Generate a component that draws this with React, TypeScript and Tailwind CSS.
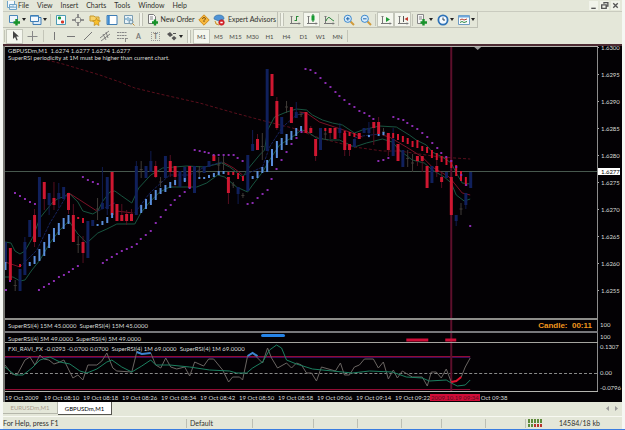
import React from "react";

type Kind = "u" | "d" | "g";
// kind, body top, body bottom, wick top, wick bottom
type Candle = [Kind, number, number, number?, number?];

const STEP = 4.854;
const cx = (i: number) => 5.5 + STEP * i;

const CANDLES: Candle[] = [
    ["u", 242, 262], ["d", 248, 280], ["g", 280, 291], ["u", 269, 291], ["u", 242, 275, 237, 275],
    ["u", 220, 237], ["d", 215, 242, 209, 247], ["u", 177, 237], ["d", 182, 199, 182, 210], ["u", 193, 205, 193, 215],
    ["d", 198, 205, 182, 210], ["u", 193, 199, 183, 208], ["u", 187, 199], ["d", 193, 210, 193, 214], ["d", 215, 242, 204, 242],
    ["g", 236, 253], ["d", 242, 253, 236, 263], ["u", 221, 258], ["u", 220, 226], ["g", 198, 220],
    ["u", 203, 209, 167, 209], ["u", 177, 209, 177, 215], ["d", 172, 215], ["d", 204, 221], ["d", 215, 221, 204, 221],
    ["d", 214, 221, 210, 225], ["d", 214, 221, 209, 221], ["u", 166, 215, 161, 215], ["g", 161, 178], ["u", 166, 178],
    ["u", 161, 172, 151, 172], ["d", 166, 177, 161, 178], ["g", 177, 187], ["u", 156, 178], ["d", 161, 172, 155, 177],
    ["d", 166, 177, 166, 187], ["u", 171, 187], ["u", 167, 181], ["d", 166, 188], ["u", 166, 193],
    ["g", 166, 178], ["u", 166, 173], ["u", 161, 167], ["d", 155, 161], ["g", 157, 173],
    ["g", 156, 170], ["d", 177, 193, 177, 204], ["g", 182, 188], ["u", 187, 194, 187, 204], ["g", 193, 198],
    ["u", 155, 191], ["u", 144, 151, 130, 151], ["d", 139, 150, 134, 150], ["g", 133, 160], ["u", 69, 151],
    ["d", 74, 96], ["d", 101, 128, 97, 130], ["u", 117, 134], ["g", 101, 113], ["d", 107, 123],
    ["u", 112, 118, 102, 118], ["g", 112, 117], ["d", 112, 133], ["d", 128, 133, 126, 133], ["d", 139, 156, 139, 161],
    ["u", 128, 150], ["g", 128, 140], ["d", 128, 133, 128, 139], ["d", 128, 139], ["u", 128, 133, 123, 138],
    ["d", 133, 150, 131, 156], ["d", 144, 150, 144, 156], ["u", 139, 147], ["d", 133, 139], ["u", 128, 133],
    ["u", 128, 133, 122, 138], ["d", 122, 128, 122, 145], ["d", 122, 134, 117, 136], ["g", 128, 136], ["d", 133, 150, 133, 156],
    ["u", 139, 156, 128, 156], ["d", 144, 161], ["u", 150, 167], ["g", 150, 167], ["g", 154, 172],
    ["d", 156, 161, 156, 166], ["d", 156, 161, 156, 172], ["d", 166, 188], ["u", 166, 183], ["d", 166, 172, 155, 177],
    ["d", 177, 182, 172, 188], ["u", 172, 178], ["d", 177, 215], ["u", 215, 221, 215, 226], ["g", 203, 215],
    ["u", 193, 205, 193, 209], ["u", 172, 188],
];

const BODY = { u: "#10205c", d: "#cf1731", g: "#403c38" };
const WICK = { u: "#101c50", d: "#560f20", g: "#403c38" };

// candle index, top, bottom
const UP_TREND: number[][] = [
    [5, 262, 266], [6, 256, 264], [7, 249, 261], [8, 242, 256], [9, 234, 248], [10, 228, 242], [11, 223, 235],
    [12, 218, 229], [13, 215, 224], [19, 224, 226], [20, 221, 225], [21, 217, 223], [22, 213, 218], [28, 205, 213],
    [29, 199, 209], [30, 194, 205], [31, 190, 200], [32, 188, 194], [33, 185, 192], [34, 182, 188], [35, 180, 185],
    [37, 178, 182], [40, 177, 179], [41, 177, 179], [42, 175, 178], [43, 173, 177], [44, 171, 175], [45, 171, 174],
    [51, 176, 179], [52, 171, 178], [53, 167, 173], [54, 160, 172], [55, 149, 166], [56, 141, 158], [57, 138, 150],
    [58, 134, 145], [59, 131, 140], [60, 128, 136], [61, 126, 131], [0, 262, 270], [75, 135, 137], [77, 134, 136],
    [78, 132, 135],
];
const DOWN_TREND: number[][] = [
    [3, 264, 267], [15, 217, 219], [16, 218, 223], [46, 172, 175], [47, 172, 175], [48, 173, 179], [49, 176, 181],
    [66, 128, 131], [70, 131, 135], [71, 132, 136], [72, 133, 137], [80, 133, 138], [81, 134, 140], [82, 136, 142],
    [83, 138, 144], [84, 141, 147], [85, 140, 148], [86, 146, 151], [87, 147, 153], [88, 150, 158], [89, 153, 160],
    [90, 156, 162], [91, 157, 165], [92, 160, 168], [93, 165, 176], [94, 171, 181], [95, 177, 186],
];

// parabolic stops, one per candle
const STOPS = [
    290, 281, 193, 196, 199, 202, 204, 290, 287, 284, 281, 277, 275, 272, 269, 266, 177, 180, 182, 184, 263, 260, 257,
    254, 251, 249, 247, 244, 239, 235, 231, 223, 217, 210, 205, 200, 196, 192, 188, 150, 151, 152, 153, 155, 155, 155,
    155, 155, 158, 161, 204, 203, 198, 194, 190, 179, 169, 160, 152, 144, 138, 132, 69, 70, 73, 78, 83, 87, 92, 96, 100,
    104, 107, 111, 113, 116, 119, 161, 160, 158, 117, 119, 120, 123, 126, 129, 133, 137, 143, 148, 153, 157, 161, 167,
    175, 185, 226,
];

const UPPER =
    "5,242 11,243 15,251 20,254 25,251 33,237 40,218 44,213 53,202 59,198 64,197 69,193 78,202 83,211 93,214 98,211 103,201 110,192 115,191 122,196 132,203 139,188 151,175 163,168 187,166 205,167 222,163 230,167 238,173 243,177 250,167 260,155 265,150 268,130 275,117 287,112 297,109 307,110 313,115 323,120 333,123 343,125 355,133 363,130 380,126 397,127 410,135 417,140 427,145 433,152 443,157 452,163 457,173 463,183 471,184";
const LOWER =
    "5,277 13,277 20,281 25,280 32,270 40,260 50,243 59,231 69,221 78,234 87,243 98,233 107,229 117,224 135,224 141,213 150,202 160,192 170,187 187,187 197,187 207,183 218,175 225,177 237,187 248,192 253,185 263,172 270,160 280,145 290,139 302,130 307,131 317,138 330,140 340,140 355,147 367,143 383,139 393,142 400,150 413,160 425,163 433,170 445,177 452,183 457,195 465,201 471,199";
const MID_RED = [
    "5,262 20,267", "69,193 80,200 97,211", "117,211 133,213", "225,163 234,168 243,175",
    "300,112 307,113 320,122 335,127 350,132 363,137", "383,135 390,137 407,147 423,157 433,167 450,177 463,193 471,195",
];
const MID_BLUE = [
    "20,267 37,250 50,223 60,207 67,195", "98,211 115,203", "135,213 150,193 170,175 190,175 205,167 222,162",
    "245,175 263,167 270,147 283,127 297,115 305,113", "355,138 363,136 380,134",
];
const SLOW = "47,60 63,64 80,69 100,75 120,82 135,88 160,94 200,103 235,113 265,121 293,128 320,138 355,147 383,151 400,151 440,157 471,159";

const RAVI =
    "5,367 15,375 23,375 32,368 40,360 50,357 60,362 70,364 80,371 87,373 97,369 107,362 112,360 122,367 132,372 142,366 151,360 156,365 170,365 190,367 210,370 230,371 237,373 247,373 253,368 263,362 270,350 277,345 282,348 287,360 297,364 313,369 333,371 353,373 370,371 393,372 407,377 423,378 430,381 447,380 452,383 458,386 466,385 471,380";
const RSI =
    "5,365 12,374 17,375 25,360 30,357 35,365 40,355 44,359 49,360 54,364 60,362 64,360 73,378 78,375 83,380 88,365 97,365 102,361 107,353 113,368 117,371 132,372 137,352 142,354 151,353 156,365 161,368 166,358 171,367 177,369 185,367 190,376 195,362 204,366 209,359 214,359 223,370 229,382 233,377 240,377 243,380 248,356 253,353 263,363 268,348 272,358 278,368 287,363 292,368 297,363 302,365 307,373 312,373 317,381 322,367 336,371 341,363 345,375 350,375 355,367 360,365 365,359 374,359 379,368 384,362 389,379 394,370 398,378 403,371 413,377 423,377 428,386 432,372 437,372 442,378 447,369 452,382 457,381 462,377 466,367 471,358";

const PRICES = ["1.6300", "1.6295", "1.6290", "1.6285", "1.6280", "1.6275", "1.6270", "1.6265", "1.6260", "1.6255"];
const TIMES = ["2009", "08:10", "08:18", "08:26", "08:34", "08:42", "08:50", "08:58", "09:06", "09:14"];
const MENU = ["File", "View", "Insert", "Charts", "Tools", "Window", "Help"];
const FRAMES = ["M1", "M5", "M15", "M30", "H1", "H4", "D1", "W1", "MN"];

const Icon: React.FC<{ children: React.ReactNode }> = ({ children }) => (
    <svg viewBox="0 0 12 12" className="h-3 w-3 shrink-0" fill="none" stroke="#555" strokeWidth="1" aria-hidden="true">
        {children}
    </svg>
);

const Tool: React.FC<{ label: string; pressed?: boolean; menu?: boolean; children: React.ReactNode }> = ({
    label,
    pressed,
    menu,
    children,
}) => (
    <button
        type="button"
        aria-label={label}
        className={`flex h-[15px] shrink-0 items-center justify-center ${menu ? "w-[21px]" : "w-[17px]"} ${
            pressed ? "border border-[#c4c7bb] bg-[#f4f6ee]" : ""
        }`}
    >
        <Icon>{children}</Icon>
        {menu && (
            <svg viewBox="0 0 4 3" className="ml-px h-[3px] w-1 shrink-0" aria-hidden="true">
                <path d="M0 0h4L2 3z" fill="#222" />
            </svg>
        )}
    </button>
);

const Sep = () => <span className="mx-px h-3 w-px shrink-0 bg-[#c3c5b8]" />;
const Grip = () => <span className="mx-0.5 h-[13px] w-1 shrink-0 border-x border-[#c0c2b6] bg-[#f0f2e8]" />;

const Axes = () => <path d="M2.5 2v8M1 9.5h10M1.5 3l1-1 1 1M10 8.5l1 1-1 1" stroke="#777" />;

const Toolbar = () => (
    <div className="flex h-[17px] items-center border-t border-[#c9cbbf]">
        <div className="flex h-4 items-center border-r border-b border-[#bfc1b5] pl-1">
            <Tool label="New chart" menu>
                <path d="M.5 1.5h8v7h-8z" fill="#eef4fb" stroke="#4a86b8" />
                <path d="M7.500 5v6.500M4.500 8.500h6.500" stroke="#17922a" strokeWidth="2.400" />
            </Tool>
            <Tool label="Profiles" menu>
                <path d="M3 3.500h8v7H3z" fill="#dceaf7" stroke="#3e7db5" />
                <path d="M.5 1.500h8v6h-8z" fill="#f5f9fd" stroke="#3e7db5" />
                <path d="M1 2.500h7" stroke="#7db0dc" />
            </Tool>
            <Sep />
            <Tool label="Market watch">
                <path d="M1.500 1.500h9v9h-9z" fill="#f7fbff" stroke="#4b9bb5" />
                <path d="M3 4h3M4.500 2.500v3" stroke="#1d9c38" strokeWidth="2" />
                <path d="M6 8h3M7.500 6.500v3" stroke="#d43b2c" strokeWidth="2" />
            </Tool>
            <Tool label="Data window">
                <circle cx="6" cy="6" r="3" stroke="#999" />
                <path d="M6 0v4M6 8v4M0 6h4M8 6h4" stroke="#777" strokeWidth="1.500" />
            </Tool>
            <Tool label="Navigator">
                <path d="M1 2h4l1 1h4v4H1z" fill="#f7d36a" stroke="#c79a2e" />
                <path d="M7.500 4l1.200 2.500 2.800.3-2 2 .5 2.700-2.500-1.300L5 11.500l.5-2.700-2-2 2.800-.3z" fill="#f8bf2c" stroke="#c28a17" strokeWidth=".7" />
            </Tool>
            <Tool label="Terminal">
                <path d="M1 1.500h10v9H1z" fill="#fff" stroke="#3e7db5" />
                <path d="M2.500 2v8" stroke="#3f8bd0" strokeWidth="2.500" />
            </Tool>
            <Tool label="Strategy tester">
                <path d="M1.500 1.500h8v8h-8z" fill="#e8f2f8" stroke="#7a9db2" />
                <path d="M3 6V4M5 7V3M7 6V4" stroke="#4c8fb8" />
                <circle cx="8" cy="8" r="2" fill="#d6ecf8" stroke="#6d8da0" />
                <path d="M9.500 9.500l2 2" stroke="#c58a2c" />
            </Tool>
            <Grip />
            <button type="button" className="flex h-[15px] items-center gap-px pl-0.5">
                <Icon>
                    <path d="M1.500.5h5l2 2v7h-7z" fill="#fafafa" stroke="#777" />
                    <path d="M3 3h3M3 5h3" stroke="#888" />
                    <path d="M8 5.500v6M5 8.500h6" stroke="#17922a" strokeWidth="2.400" />
                </Icon>
                <span className="w-[35px] whitespace-nowrap">New Order</span>
            </button>
            <Tool label="Editor">
                <path d="M6 .8L11.200 6 6 11.200.8 6z" fill="#f6b73c" stroke="#d28c1c" />
                <path d="M4.500 5q0-1.500 1.500-1.500T7.500 5L6 6.500V8" stroke="#7d5212" />
            </Tool>
            <button type="button" className="flex h-[15px] items-center gap-0.5 pl-px">
                <Icon>
                    <path d="M1 5q0-4 5-4t5 4l-5 2z" fill="#4f94d6" stroke="#3470a8" strokeWidth=".7" />
                    <path d="M2 7q0 4 4 4" fill="#f3ca6c" stroke="#c9973b" />
                    <circle cx="8.500" cy="8.500" r="2.800" fill="#d8232a" stroke="#b4161c" strokeWidth=".5" />
                    <path d="M7.300 8.500h2.400" stroke="#fff" strokeWidth="1.500" />
                </Icon>
                <span className="w-[50px] whitespace-nowrap">Expert Advisors</span>
            </button>
        </div>
        <div className="flex h-4 items-center border-r border-b border-[#bfc1b5]">
            <Grip />
            <Tool label="Bar chart">
                <Axes />
                <path d="M7.500 2v5M7.500 2.500h2M5.500 6.500h2" stroke="#2a8a3a" />
            </Tool>
            <Tool label="Candlesticks" pressed>
                <Axes />
                <path d="M7 0v8" stroke="#17702a" />
                <path d="M7 1.500v5" stroke="#159a30" strokeWidth="3" />
            </Tool>
            <Tool label="Line chart">
                <Axes />
                <path d="M3 7q2-5 4-3t4 3" stroke="#2f8a40" />
            </Tool>
            <Sep />
            <Tool label="Zoom in">
                <path d="M7.500 7.500l3.500 3.500" stroke="#d09a3c" strokeWidth="2" />
                <circle cx="4.800" cy="4.800" r="3.600" fill="#d8ecfb" stroke="#3b87cc" />
                <path d="M3 4.800h3.600M4.800 3v3.600" stroke="#2167aa" />
            </Tool>
            <Tool label="Zoom out">
                <path d="M7.500 7.500l3.500 3.500" stroke="#d09a3c" strokeWidth="2" />
                <circle cx="4.800" cy="4.800" r="3.600" fill="#d8ecfb" stroke="#3b87cc" />
                <path d="M3 4.800h3.600" stroke="#2167aa" />
            </Tool>
            <Sep />
            <Tool label="Auto scroll" pressed>
                <Axes />
                <path d="M6 3v5l4-2.500z" fill="#1e9a35" stroke="none" />
            </Tool>
            <Tool label="Chart shift" pressed>
                <Axes />
                <path d="M6.500 2v6" />
                <path d="M11 3v4L7.500 5z" fill="#c4392d" stroke="none" />
            </Tool>
            <Sep />
            <Tool label="Indicators" menu>
                <path d="M1.500.5h6v9h-6z" fill="#f4f4f4" stroke="#888" />
                <path d="M3 3h3M3 5h3" stroke="#888" />
                <path d="M7.500 5v6.500M4.500 8.500h6.500" stroke="#17922a" strokeWidth="2.400" />
            </Tool>
            <Tool label="Periods" menu>
                <circle cx="6" cy="6" r="4.600" fill="#f4faff" stroke="#2f73b8" strokeWidth="1.800" />
                <path d="M6 3.500V6h2" stroke="#345" />
            </Tool>
            <Tool label="Templates" menu>
                <path d="M.5 1.500h11v9H.5z" fill="#f7fbff" stroke="#6f9cc2" />
                <path d="M1 2.500h10" stroke="#6fa8dc" strokeWidth="2" />
                <path d="M2 6l2-1 2 1 3-1" stroke="#b8432f" />
                <path d="M2 8.500l2-1 2 1 3-1" stroke="#2f8a40" />
            </Tool>
        </div>
    </div>
);

const DrawBar = () => (
    <div className="flex h-4 items-center">
        <Sep />
        <Tool label="Cursor" pressed>
            <path d="M4 1v8l2-2 1.500 3.500 1.200-.6L7.300 6.500H10z" fill="#444" stroke="none" />
        </Tool>
        <Tool label="Crosshair">
            <path d="M6.500 1v10M1.500 6.500h10" stroke="#888" />
        </Tool>
        <span className="w-0.5" />
        <Sep />
        <Tool label="Vertical line">
            <path d="M6.500 2v8" stroke="#777" />
        </Tool>
        <Tool label="Horizontal line">
            <path d="M2 6.500h8" stroke="#777" />
        </Tool>
        <Tool label="Trendline">
            <path d="M2 10l8-8" stroke="#777" />
        </Tool>
        <Tool label="Channel">
            <path d="M1 8l9-7M2 11l9-7M4 4l3 6M7 2l2 6" stroke="#777" strokeWidth=".9" />
        </Tool>
        <Tool label="Fibonacci">
            <path d="M1 2.500h10M1 5.500h10M1 8.500h7" stroke="#888" strokeDasharray="2 .5" />
            <path d="M9.500 8v4M9.500 8.500H12" stroke="#777" strokeWidth=".8" />
        </Tool>
        <button type="button" className="w-[17px] text-center font-bold text-[#777]">A</button>
        <button type="button" className="flex w-[17px] justify-center">
            <span className="h-[9px] w-[9px] border border-dotted border-[#999] text-center leading-[7px] font-bold text-[#777]">T</span>
        </button>
        <Tool label="Arrows" menu>
            <path d="M4 2l3 3-3 2-3-3zM8 6l2.500 2L8 10.500 5.500 8z" fill="#555" stroke="none" />
            <path d="M7 3.500h3" />
        </Tool>
        <Grip />
        {FRAMES.map((f, i) => (
            <button
                key={f}
                type="button"
                className={`h-[15px] w-[17px] text-center text-[6px] text-[#4a4a46] ${
                    i === 0 ? "border border-[#c4c7bb] bg-[#f4f6ee]" : ""
                }`}
            >
                {f}
            </button>
        ))}
        <Sep />
    </div>
);

const Cross = () => <path d="M452 0V400" stroke="#5d0f2b" strokeWidth="2" />;

const Pane: React.FC<{
    box: string;
    size: string;
    axis: React.ReactNode;
    children: React.ReactNode;
    label: React.ReactNode;
}> = ({ box, size, axis, children, label }) => (
    <div className={`flex ${size}`}>
        <div className="relative min-w-0 flex-1 border-r border-[#8c8c8c]">
            <svg viewBox={box} preserveAspectRatio="none" className="block h-full w-full" fill="none">
                {children}
            </svg>
            <div className="absolute top-0 left-[3px] whitespace-nowrap">{label}</div>
        </div>
        <div className="relative w-6">{axis}</div>
    </div>
);

const MainPane = () => (
    <Pane
        box="5 47 593 271"
        size="h-[271px]"
        label={
            <div className="leading-[7px]">
                <p>GBPUSDm,M1&nbsp; 1.6274 1.6277 1.6274 1.6277</p>
                <p>SuperRSI periodicity at 1M must be higher than current chart.</p>
            </div>
        }
        axis={
            <>
                <div className="-mt-[3px]">
                    {PRICES.map((p) => (
                        <p key={p} className="flex h-[27px] items-start leading-[7px]">
                            <span className="mt-[3px] mr-0.5 h-px w-px bg-[#aaa]" />
                            {p}
                        </p>
                    ))}
                </div>
                <p className="absolute top-[121px] left-0 h-[7px] w-[22px] bg-white pl-[3px] leading-[7px] text-black">1.6277</p>
            </>
        }
    >
        <path d="M5 171.500H598" stroke="#47584e" />
        <polyline points={SLOW} stroke="#5a0f1c" strokeDasharray="3 2" />
        <Cross />
        <polyline points={UPPER} stroke="#185440" />
        <polyline points={LOWER} stroke="#185440" />
        {MID_BLUE.map((p) => (
            <polyline key={p} points={p} stroke="#15215a" strokeDasharray="3 1" />
        ))}
        {MID_RED.map((p) => (
            <polyline key={p} points={p} stroke="#7a1226" />
        ))}
        {CANDLES.map(([k, top, bottom, hi = top, lo = bottom], i) => (
            <g key={i}>
                <path d={`M${cx(i)} ${hi}V${lo}`} stroke={WICK[k]} />
                {k !== "g" && <path d={`M${cx(i)} ${top}V${bottom}`} stroke={BODY[k]} strokeWidth="3" />}
                {k === "g" && <path d={`M${cx(i) - 1.5} ${(top + bottom) / 2}h3`} stroke={BODY.g} />}
            </g>
        ))}
        {UP_TREND.map(([i, a, b]) => (
            <path key={i} d={`M${cx(i)} ${a}V${b}`} stroke="#5a8edb" strokeWidth="2" />
        ))}
        {DOWN_TREND.map(([i, a, b]) => (
            <path key={i} d={`M${cx(i)} ${a}V${b}`} stroke="#d5142f" strokeWidth="2" />
        ))}
        {STOPS.map((y, i) => (
            <rect key={i} x={Math.round(cx(i)) - 1} y={y - 1} width="2" height="2" fill="#8a2bb0" />
        ))}
        <path d="M475 47h7l-3.500 3z" fill="#9a9a9a" />
    </Pane>
);

const App: React.FC = () => (
    <div className="bg-[#f5f7f3] px-[3px] font-[Lato,'Liberation_Sans',sans-serif] text-[7px] leading-[9px] text-[#30302c]">
        <div className="bg-[#e4e7d9]">
            <nav className="flex h-[11px] items-center">
                <svg viewBox="0 0 12 10" className="ml-[3px] h-2.5 w-3" fill="none" aria-hidden="true">
                    <path d="M1.500 0v6.500h7V0" fill="#f4faff" stroke="#6ea3c8" />
                    <path d="M3.500 3.500h7v5h-7z" fill="#e6f1fa" stroke="#6ea3c8" />
                    <path d="M5 7V5M7 7V4.500M9 7V5.500" stroke="#4c8fb8" />
                </svg>
                <div className="flex flex-1 gap-2">
                    {MENU.map((m) => (
                        <button key={m} type="button">{m}</button>
                    ))}
                </div>
                <div className="flex gap-0.5 pr-0.5">
                    {["M2 6.500h4", "M3.500 1v1.500M3 1.500h4v3H6M1.500 3.500h4v3h-4z", "M2 2l4 4M6 2L2 6"].map((d, i) => (
                        <button key={d} type="button" aria-label={["Minimize", "Restore", "Close"][i]} className="bg-[#f1f3ea]">
                            <svg viewBox="0 0 8 8" className="block h-[9px] w-[9px]" fill="none">
                                <path d={d} stroke="#555" strokeWidth="1.200" />
                            </svg>
                        </button>
                    ))}
                </div>
            </nav>
            <Toolbar />
            <DrawBar />
        </div>

        <main className="border-t-2 border-[#4d2b33] bg-[#030104] text-[6px] leading-[7px] text-[#d8dcd8]">
            <div className="border-l-2 border-[#777773]">
                <div className="mr-6 h-px bg-[#b5b5b0]" />
                <MainPane />
                <div className="mr-6 h-0.5 bg-[#8d8d8a]" />
                <Pane
                    box="5 320 593 11"
                    size="h-[11px]"
                    label={<p className="pt-0.5">SuperRSI(4) 15M 45.0000&nbsp; SuperRSI(4) 15M 45.0000</p>}
                    axis={<p className="pt-px pl-0.5">100</p>}
                >
                    <Cross />
                </Pane>
                <div className="relative mr-6 h-0.5 bg-[#77777b]">
                    <p className="absolute right-1.5 bottom-0.5 font-['Liberation_Sans',Arial,sans-serif] text-[8px] leading-[11px] font-bold whitespace-nowrap text-[#f0961e]">
                        Candle:&nbsp; 00:11
                    </p>
                </div>
                <Pane
                    box="5 333 593 9"
                    size="h-[9px]"
                    label={<p className="pt-0.5">SuperRSI(4) 5M 49.0000&nbsp; SuperRSI(4) 5M 49.0000</p>}
                    axis={<p className="pl-0.5">100</p>}
                >
                    <Cross />
                    <path d="M263 335.500H284" stroke="#2583e6" strokeWidth="3" strokeLinecap="round" />
                    <path d="M407 340H429M446 340H457" stroke="#d00d38" strokeWidth="3" />
                </Pane>
                <div className="mr-6 h-px bg-[#a5a5a0]" />
                <Pane
                    box="5 343 593 48"
                    size="h-12"
                    label={
                        <p className="pt-0.5">
                            FXI_RAVI_FX -0.0293 -0.0700 0.0700&nbsp; SuperRSI(4) 1M 69.0000&nbsp; SuperRSI(4) 1M 69.0000
                        </p>
                    }
                    axis={
                        <div className="flex h-12 flex-col justify-between pl-0.5">
                            <p>0.1307</p>
                            <p className="pt-2.5">0.00</p>
                            <p>-0.0796</p>
                        </div>
                    }
                >
                    <path d="M5 356.500H471M5 389.500H471" stroke="#920c34" strokeWidth="1" />
                    <path d="M5 357.500H471" stroke="#3c0c58" strokeWidth="1" />
                    <path d="M5 373.500H598" stroke="#8a8a8a" strokeDasharray="3 2" />
                    <Cross />
                    <polyline points={RSI} stroke="#6a6562" />
                    <polyline points={RAVI} stroke="#1c8060" />
                    <path d="M137 352l5 2 9-1M248 356l5-3 5 3" stroke="#3b86d0" strokeWidth="2" />
                    <path d="M452 382l5-1 5-4" stroke="#e0122e" strokeWidth="2" />
                </Pane>
                <div className="mr-6 h-px bg-[#b5b5b0]" />
                <div className="flex h-2.5 items-center whitespace-nowrap">
                    {TIMES.map((t) => (
                        <span key={t} className="w-[39px]">19 Oct {t}</span>
                    ))}
                    <span className="w-[35px]">19 Oct 09:22</span>
                    <span className="bg-[#d00d38] px-px text-[#5a0a1c]">2009.10.19 09:34</span>
                    <span className="pl-px">Oct 09:38</span>
                </div>
            </div>
        </main>

        <div className="flex h-3.5 items-start bg-[#e4e7d9] text-center text-[6px]">
            <button type="button" className="h-3 w-[55px] border-r border-b border-[#b5b7ab] text-[#aa9c8c]">EURUSDm,M1</button>
            <button type="button" className="h-[13px] w-[54px] border-r border-b border-[#55554f] bg-white text-black">
                GBPUSDm,M1
            </button>
            <span className="ml-auto flex gap-1.5 pt-1 pr-1">
                <svg viewBox="0 0 3 5" className="h-[5px] w-[3px]"><path d="M3 0v5L0 2.500z" fill="#999" /></svg>
                <svg viewBox="0 0 3 5" className="h-[5px] w-[3px]"><path d="M0 0v5l3-2.500z" fill="#999" /></svg>
            </span>
        </div>
        <footer className="flex h-[13px] items-center border-t border-[#f8f9f2] bg-[#e4e7d9]">
            <span className="w-[183px]">For Help, press F1</span>
            <span className="w-[66px] border-l border-[#bdbfb3] pl-[3px]">Default</span>
            <span className="h-[9px] w-[61px] border-l border-[#bdbfb3]" />
            <span className="h-[9px] w-11 border-l border-[#bdbfb3]" />
            <span className="h-[9px] w-11 border-l border-[#bdbfb3]" />
            <span className="h-[9px] w-10 border-l border-[#bdbfb3]" />
            <span className="h-[9px] w-11 border-l border-[#bdbfb3]" />
            <span className="h-[9px] w-10 border-l border-[#bdbfb3]" />
            <span className="flex flex-1 items-center border-l border-[#bdbfb3] pl-0.5">
                <svg viewBox="0 0 15 8" className="h-2 w-[15px]" fill="none" aria-hidden="true">
                    <path d="M0 2h15" stroke="#5d8a3a" strokeWidth="4" strokeDasharray="2 1" />
                    <path d="M0 6.500h6" stroke="#5d8a3a" strokeWidth="3" strokeDasharray="2 1" />
                    <path d="M6 6.500h9" stroke="#b8332c" strokeWidth="3" strokeDasharray="2 1" />
                </svg>
                <span className="pl-4">14584/18 kb</span>
            </span>
        </footer>
        <div className="-mx-[3px] h-px bg-[#3b7de0]" />
    </div>
);

export default App;
